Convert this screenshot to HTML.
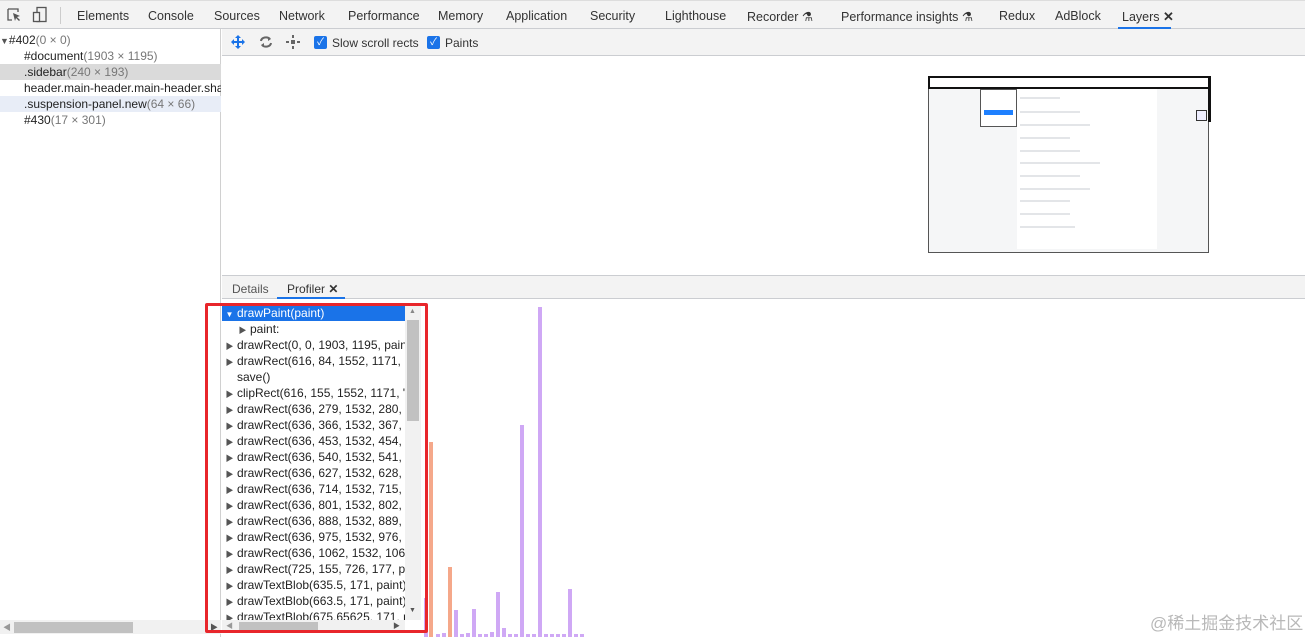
<!DOCTYPE html>
<html><head><meta charset="utf-8"><style>
*{margin:0;padding:0;box-sizing:border-box}
body{width:1305px;height:637px;overflow:hidden;background:#fff;font-family:"Liberation Sans","Noto Sans CJK SC",sans-serif;font-size:12px;color:#303942;position:relative}
.abs{position:absolute}
.tabs{left:0;top:0;width:1305px;height:29px;background:#f3f3f3;border-bottom:1px solid #cbcdd1;border-top:1px solid #ddd}
.tab{position:absolute;top:8px;font-size:12.5px;color:#333}
.left{left:0;top:29px;width:221px;height:608px;border-right:1px solid #d0d0d0;background:#fff}
.tr{position:absolute;left:0;width:221px;height:16px;line-height:16px;white-space:nowrap;overflow:hidden;font-size:12px;color:#222}
.dim{color:#777}
.tool{left:222px;top:29px;width:1083px;height:27px;background:#f3f3f3;border-bottom:1px solid #cbcdd1}
.cb{position:absolute;top:7px;width:13px;height:13px;background:#1a73e8;border-radius:2px;color:#fff;font-size:10px;line-height:13px;text-align:center}
.btabs{left:222px;top:275px;width:1083px;height:24px;background:#f3f3f3;border-bottom:1px solid #cbcdd1;border-top:1px solid #cbcdd1}
.row{position:absolute;left:222px;width:183px;height:16px;line-height:16px;font-size:12px;white-space:nowrap;overflow:hidden;color:#222}
.tri{display:inline-block;width:15px;font-size:8px;color:#555;text-align:center}
.bar{position:absolute;width:4px;background:#cfa8f5;bottom:0}
.o{background:#f5a88a}
.ln{position:absolute;left:1020px;height:2px;background:#e3e5e8}
</style></head><body>
<div class="abs tabs">
 <svg class="abs" style="left:6px;top:6px" width="16" height="16" viewBox="0 0 16 16"><path d="M2 2h10v3M2 2v11h4" fill="none" stroke="#555" stroke-width="1.3"/><path d="M7 6l7 3-3 1 3 3-1 1-3-3-1 3z" fill="#555"/></svg>
 <svg class="abs" style="left:32px;top:5px" width="16" height="18" viewBox="0 0 16 18"><rect x="5" y="1.5" width="9" height="14" fill="none" stroke="#555" stroke-width="1.3"/><rect x="1.5" y="6.5" width="6" height="9" fill="#f3f3f3" stroke="#555" stroke-width="1.3"/></svg>
 <div class="abs" style="left:60px;top:6px;width:1px;height:17px;background:#ccc"></div>
 <span class="tab" style="left:77px">Elements</span><span class="tab" style="left:148px">Console</span><span class="tab" style="left:214px">Sources</span><span class="tab" style="left:279px">Network</span><span class="tab" style="left:348px">Performance</span><span class="tab" style="left:438px">Memory</span><span class="tab" style="left:506px">Application</span><span class="tab" style="left:590px">Security</span><span class="tab" style="left:665px">Lighthouse</span><span class="tab" style="left:747px">Recorder ⚗</span><span class="tab" style="left:841px">Performance insights ⚗</span><span class="tab" style="left:999px">Redux</span><span class="tab" style="left:1055px">AdBlock</span><span class="tab" style="left:1122px">Layers <b style="font-size:13px">✕</b></span>
 <div class="abs" style="left:1118px;top:26px;width:53px;height:2px;background:#1a73e8"></div>
</div>
<div class="abs left">
 <div class="tr" style="top:3px"><span style="font-size:9px;color:#555">▼</span>#402<span class="dim">(0 × 0)</span></div>
 <div class="tr" style="top:19px;padding-left:24px">#document<span class="dim">(1903 × 1195)</span></div>
 <div class="tr" style="top:35px;padding-left:24px;background:#dadada">.sidebar<span class="dim">(240 × 193)</span></div>
 <div class="tr" style="top:51px;padding-left:24px">header.main-header.main-header.shadow</div>
 <div class="tr" style="top:67px;padding-left:24px;background:#e8edf7">.suspension-panel.new<span class="dim">(64 × 66)</span></div>
 <div class="tr" style="top:83px;padding-left:24px">#430<span class="dim">(17 × 301)</span></div>
 <div class="abs" style="left:0;top:591px;width:221px;height:14px;background:#f1f1f1"></div>
 <div class="abs" style="left:14px;top:593px;width:119px;height:11px;background:#c1c1c1"></div>
 <div class="abs" style="left:3px;top:593px;font-size:8px;color:#999">◀</div>
 <div class="abs" style="left:210px;top:593px;font-size:8px;color:#555">▶</div>
</div>
<div class="abs tool">
 <svg class="abs" style="left:8px;top:5px" width="16" height="16" viewBox="0 0 16 16"><path d="M8 1l3 3H9v3h3V5l3 3-3 3V9H9v3h2l-3 3-3-3h2V9H4v2L1 8l3-3v2h3V4H5z" fill="#1a73e8"/></svg>
 <svg class="abs" style="left:36px;top:5px" width="16" height="16" viewBox="0 0 16 16"><path d="M3 7a5 4 0 0 1 9-2M13 9a5 4 0 0 1-9 2" fill="none" stroke="#666" stroke-width="2"/><path d="M10 3l3 2-3 2zM6 9l-3 2 3 2z" fill="#666"/></svg>
 <svg class="abs" style="left:63px;top:5px" width="16" height="16" viewBox="0 0 16 16"><g fill="#666"><rect x="7" y="1" width="2" height="3"/><rect x="7" y="12" width="2" height="3"/><rect x="1" y="7" width="3" height="2"/><rect x="12" y="7" width="3" height="2"/><rect x="6" y="6" width="4" height="4"/></g></svg>
 <div class="cb" style="left:92px">✓</div><span class="abs" style="left:110px;top:7px;font-size:12px;color:#333">Slow scroll rects</span>
 <div class="cb" style="left:205px">✓</div><span class="abs" style="left:223px;top:7px;font-size:12px;color:#333">Paints</span>
</div>
<!-- thumbnail -->
<div class="abs" style="left:928px;top:76px;width:281px;height:177px;border:1px solid #555;background:#f5f6f7"></div>
<div class="abs" style="left:928px;top:76px;width:283px;height:13px;border:2px solid #111;background:#fff"></div>
<div class="abs" style="left:1208px;top:76px;width:3px;height:46px;background:#111"></div>
<div class="abs" style="left:1017px;top:89px;width:140px;height:160px;background:#fff"></div>
<div class="ln" style="top:97px;width:40px"></div>
<div class="ln" style="top:111px;width:60px"></div><div class="ln" style="top:124px;width:70px"></div><div class="ln" style="top:137px;width:50px"></div><div class="ln" style="top:150px;width:60px"></div><div class="ln" style="top:162px;width:80px"></div><div class="ln" style="top:175px;width:60px"></div><div class="ln" style="top:188px;width:70px"></div><div class="ln" style="top:200px;width:50px"></div><div class="ln" style="top:213px;width:50px"></div><div class="ln" style="top:226px;width:55px"></div>
<div class="abs" style="left:980px;top:89px;width:37px;height:38px;border:1px solid #555;background:#fff"><div style="margin:20px 3px 0;height:5px;background:#1e80ff"></div></div>
<div class="abs" style="left:1196px;top:110px;width:11px;height:11px;border:1px solid #333;background:#eef"></div>
<div class="abs btabs">
 <span class="abs" style="left:10px;top:6px;color:#555">Details</span>
 <span class="abs" style="left:65px;top:6px;color:#333">Profiler <b>✕</b></span>
 <div class="abs" style="left:55px;top:21px;width:68px;height:2px;background:#1a73e8"></div>
</div>
<!-- bars -->
<div class="abs" style="left:0;top:0;width:1305px;height:637px;pointer-events:none">
<div class="bar" style="left:424px;height:39px"></div>
<div class="bar o" style="left:429px;height:195px"></div>
<div class="bar" style="left:436px;height:3px"></div><div class="bar" style="left:442px;height:4px"></div>
<div class="bar o" style="left:448px;height:70px"></div>
<div class="bar" style="left:454px;height:27px"></div><div class="bar" style="left:460px;height:3px"></div><div class="bar" style="left:466px;height:4px"></div>
<div class="bar" style="left:472px;height:28px"></div><div class="bar" style="left:478px;height:3px"></div><div class="bar" style="left:484px;height:3px"></div>
<div class="bar" style="left:490px;height:5px"></div><div class="bar" style="left:496px;height:45px"></div><div class="bar" style="left:502px;height:9px"></div>
<div class="bar" style="left:508px;height:3px"></div><div class="bar" style="left:514px;height:3px"></div>
<div class="bar" style="left:520px;height:212px"></div><div class="bar" style="left:526px;height:3px"></div><div class="bar" style="left:532px;height:3px"></div>
<div class="bar" style="left:538px;height:330px"></div>
<div class="bar" style="left:544px;height:3px"></div><div class="bar" style="left:550px;height:3px"></div><div class="bar" style="left:556px;height:3px"></div><div class="bar" style="left:562px;height:3px"></div>
<div class="bar" style="left:568px;height:48px"></div><div class="bar" style="left:574px;height:3px"></div><div class="bar" style="left:580px;height:3px"></div>
</div>
<!-- command list -->
<div class="abs" style="left:222px;top:299px;width:200px;height:338px;background:#fff"></div>
<div class="row" style="top:305px;background:#1a73e8;color:#fff"><span class="tri" style="color:#fff">▼</span>drawPaint(paint)</div>
<div class="row" style="top:321px;padding-left:13px"><span class="tri">▶</span>paint:</div>
<div class="row" style="top:337px"><span class="tri">▶</span>drawRect(0, 0, 1903, 1195, paint)</div>
<div class="row" style="top:353px"><span class="tri">▶</span>drawRect(616, 84, 1552, 1171, paint)</div>
<div class="row" style="top:369px"><span class="tri"></span>save()</div>
<div class="row" style="top:385px"><span class="tri">▶</span>clipRect(616, 155, 1552, 1171, "k</div>
<div class="row" style="top:401px"><span class="tri">▶</span>drawRect(636, 279, 1532, 280, paint)</div>
<div class="row" style="top:417px"><span class="tri">▶</span>drawRect(636, 366, 1532, 367, paint)</div>
<div class="row" style="top:433px"><span class="tri">▶</span>drawRect(636, 453, 1532, 454, paint)</div>
<div class="row" style="top:449px"><span class="tri">▶</span>drawRect(636, 540, 1532, 541, paint)</div>
<div class="row" style="top:465px"><span class="tri">▶</span>drawRect(636, 627, 1532, 628, paint)</div>
<div class="row" style="top:481px"><span class="tri">▶</span>drawRect(636, 714, 1532, 715, paint)</div>
<div class="row" style="top:497px"><span class="tri">▶</span>drawRect(636, 801, 1532, 802, paint)</div>
<div class="row" style="top:513px"><span class="tri">▶</span>drawRect(636, 888, 1532, 889, paint)</div>
<div class="row" style="top:529px"><span class="tri">▶</span>drawRect(636, 975, 1532, 976, paint)</div>
<div class="row" style="top:545px"><span class="tri">▶</span>drawRect(636, 1062, 1532, 1063</div>
<div class="row" style="top:561px"><span class="tri">▶</span>drawRect(725, 155, 726, 177, paint)</div>
<div class="row" style="top:577px"><span class="tri">▶</span>drawTextBlob(635.5, 171, paint)</div>
<div class="row" style="top:593px"><span class="tri">▶</span>drawTextBlob(663.5, 171, paint)</div>
<div class="row" style="top:609px;height:11px"><span class="tri">▶</span>drawTextBlob(675.65625, 171, paint)</div>
<div class="abs" style="left:405px;top:305px;width:16px;height:315px;background:#f1f1f1"></div>
<div class="abs" style="left:407px;top:320px;width:12px;height:101px;background:#c1c1c1"></div>
<div class="abs" style="left:409px;top:308px;font-size:7px;color:#888">▲</div>
<div class="abs" style="left:409px;top:607px;font-size:7px;color:#555">▼</div>
<div class="abs" style="left:222px;top:620px;width:183px;height:12px;background:#f1f1f1"></div>
<div class="abs" style="left:239px;top:622px;width:79px;height:10px;background:#c1c1c1"></div>
<div class="abs" style="left:226px;top:621px;font-size:7px;color:#999">◀</div>
<div class="abs" style="left:393px;top:621px;font-size:7px;color:#555">▶</div>
<div class="abs" style="left:205px;top:303px;width:223px;height:330px;border:3px solid #e8262b;border-radius:2px"></div>
<div class="abs" style="left:1150px;top:609px;font-size:17px;color:#b8b8b8;white-space:nowrap">@稀土掘金技术社区</div>
</body></html>
